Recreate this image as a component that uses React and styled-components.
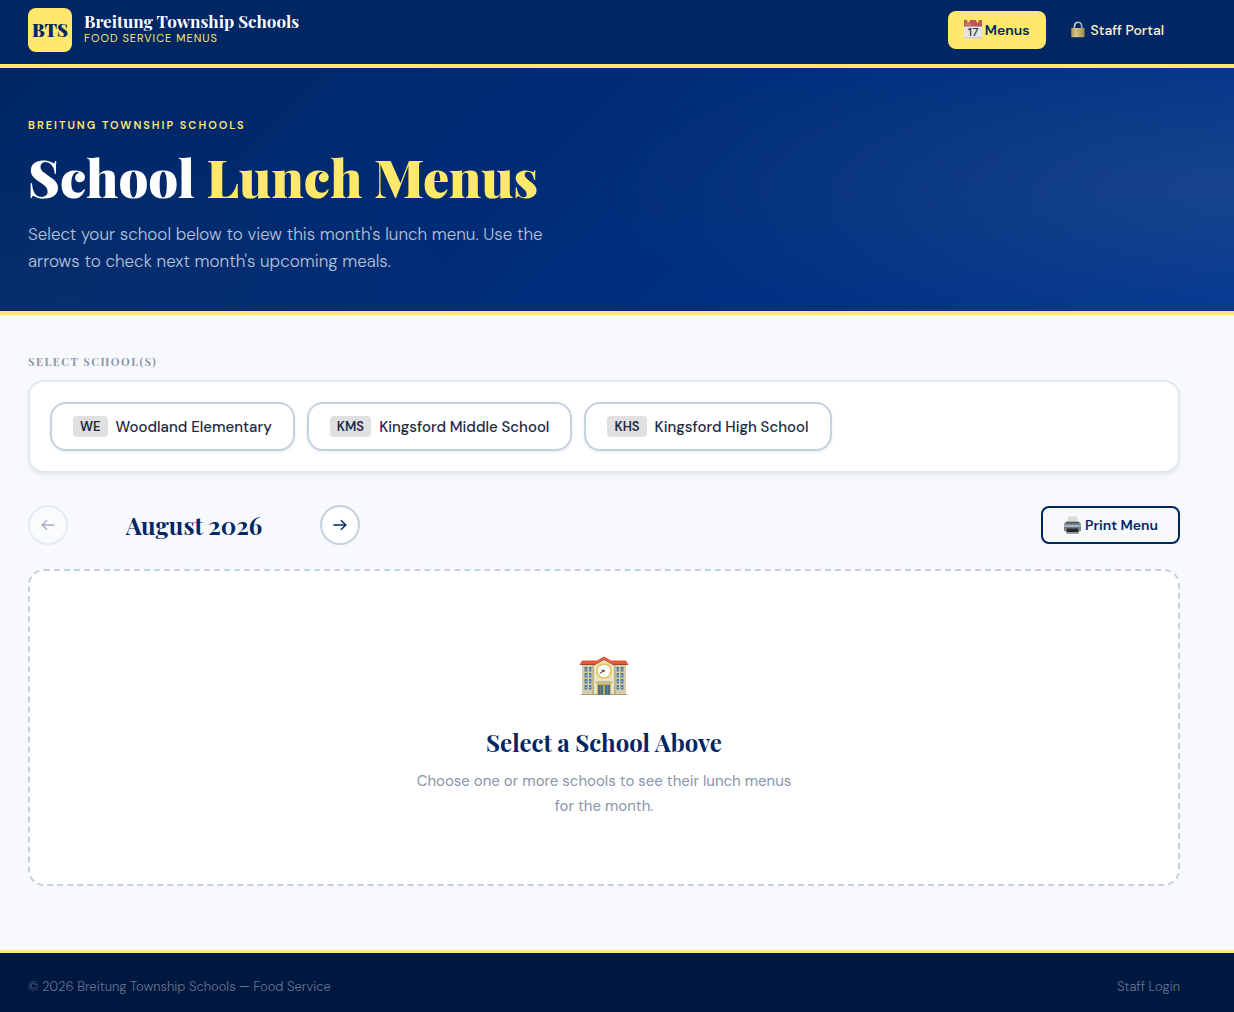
import React, { useState } from "react";
import styled, { createGlobalStyle } from "styled-components";

const navy = "#002664";
const gold = "#ffe86b";
const line = "#c5d0e0";
const muted = "#8896ab";
const serif = '"Playfair Display", "Liberation Serif", serif';
const sans = '"DM Sans", Inter, sans-serif';

const GlobalStyle = createGlobalStyle`
  *, *::before, *::after { box-sizing: border-box; }
  body { margin: 0; background: #f8f9fd; color: #1f2a44; font-family: ${sans}; font-size: 15px; }
  h1, h2, p { margin: 0; }
  button { font-family: inherit; cursor: pointer; }
  a { text-decoration: none; }
`;

const Page = styled.div`
  min-height: 100vh;
  display: flex;
  flex-direction: column;
`;

const Header = styled.header`
  display: flex;
  align-items: center;
  justify-content: space-between;
  padding: 8px 54px 12px 28px;
  background: ${navy};
  border-bottom: 4px solid ${gold};
`;

const Brand = styled.a`
  display: flex;
  align-items: center;
  gap: 12px;
  color: #fff;
`;

const Logo = styled.span`
  display: grid;
  place-items: center;
  width: 44px;
  height: 44px;
  border-radius: 8px;
  background: ${gold};
  color: ${navy};
  font: 900 18px/24px ${serif};
`;

const BrandText = styled.span`
  display: flex;
  flex-direction: column;
  gap: 1px;
  padding-bottom: 3px;
`;

const BrandName = styled.span`
  font: 700 17px/18px ${serif};
`;

const BrandSub = styled.span`
  color: ${gold};
  font-size: 11px;
  line-height: 14px;
  letter-spacing: 1px;
  text-transform: uppercase;
`;

const Nav = styled.nav`
  display: flex;
  gap: 8px;
`;

const NavLink = styled.a`
  display: flex;
  align-items: center;
  gap: 3px;
  padding: 9px 16px;
  border-radius: 8px;
  background: ${(p) => (p.$active ? gold : "transparent")};
  color: ${(p) => (p.$active ? navy : "#fff7cf")};
  font-size: 14px;
  line-height: 20px;
  font-weight: ${(p) => (p.$active ? 600 : 500)};
`;

const Hero = styled.section`
  padding: 48px 28px 36px;
  border-bottom: 4px solid ${gold};
  background:
    radial-gradient(ellipse 52% 70% at 100% 50%, rgba(255, 232, 107, 0.09), transparent),
    radial-gradient(ellipse 40% 70% at 0% 100%, rgba(255, 232, 107, 0.03), transparent),
    linear-gradient(135deg, #002664 0%, #002d7a 50%, #003594 100%);
`;

const Eyebrow = styled.p`
  margin-bottom: 13px;
  color: ${gold};
  font-size: 11px;
  line-height: 19px;
  font-weight: 600;
  letter-spacing: 2px;
  text-transform: uppercase;
`;

const Title = styled.h1`
  margin-bottom: 15px;
  color: #fff;
  font: 900 52px/58px ${serif};

  span { color: ${gold}; }
`;

const Lead = styled.p`
  max-width: 540px;
  color: #b5c2da;
  font-size: 17px;
  line-height: 27px;
  font-weight: 300;
`;

const Main = styled.main`
  flex: 1;
  padding: 36px 54px 64px 28px;
`;

const SectionLabel = styled.h2`
  margin-bottom: 8px;
  color: ${muted};
  font: 700 11px/21px ${serif};
  letter-spacing: 0.14em;
  text-transform: uppercase;
`;

const SchoolCard = styled.div`
  display: flex;
  flex-wrap: wrap;
  gap: 12px;
  padding: 20px;
  border: 2px solid #e2e8f2;
  border-radius: 16px;
  background: #fff;
  box-shadow: 0 2px 4px rgba(0, 38, 100, 0.08);
`;

const SchoolButton = styled.button`
  display: flex;
  align-items: center;
  gap: 8px;
  padding: 12px 21px;
  border: 2px solid ${(p) => (p.$selected ? navy : line)};
  border-radius: 16px;
  background: #fff;
  color: #1f2a44;
  font-size: 15px;
  line-height: 20px;
  font-weight: 500;
  box-shadow: 0 1px 3px rgba(0, 38, 100, 0.1);
`;

const Code = styled.span`
  padding: 0 7px;
  border-radius: 4px;
  background: #e0e0e0;
  font-size: 13px;
  line-height: 21px;
  font-weight: 600;
`;

const Toolbar = styled.div`
  display: flex;
  align-items: center;
  justify-content: space-between;
  margin: 32px 0 24px;
`;

const MonthPicker = styled.div`
  display: flex;
  align-items: center;
  gap: 16px;
`;

const MonthName = styled.h2`
  min-width: 220px;
  color: ${navy};
  text-align: center;
  font: 700 24px/36px ${serif};
`;

const RoundButton = styled.button`
  display: grid;
  place-items: center;
  width: 40px;
  height: 40px;
  padding: 0;
  border: 2px solid ${line};
  border-radius: 50%;
  background: #fff;
  color: ${navy};

  &:disabled { opacity: 0.35; cursor: default; }
`;

const PrintButton = styled.button`
  display: flex;
  align-items: center;
  gap: 3px;
  padding: 7px 20px;
  border: 2px solid ${navy};
  border-radius: 8px;
  background: transparent;
  color: ${navy};
  font-size: 14px;
  line-height: 20px;
  font-weight: 600;
`;

const EmptyState = styled.section`
  display: flex;
  flex-direction: column;
  align-items: center;
  padding: 81px 24px 65px;
  border: 2px dashed ${line};
  border-radius: 16px;
  background: #fff;
  text-align: center;
`;

const EmptyTitle = styled.h2`
  margin: 26px 0 11px;
  color: ${navy};
  font: 700 24px/32px ${serif};
`;

const EmptyText = styled.p`
  max-width: 384px;
  color: ${muted};
  font-size: 15px;
  line-height: 25px;
`;

const Footer = styled.footer`
  display: flex;
  justify-content: space-between;
  padding: 24px 54px 15px 28px;
  border-top: 3px solid ${gold};
  background: #00173f;
  color: #64738e;
  font-size: 13px;
  line-height: 20px;
  font-weight: 300;

  a { color: inherit; }
`;

const CalendarIcon = () => (
  <svg width="18" height="20" viewBox="0 0 18 20" aria-hidden="true">
    <path d="M0 5h18v13.5H0z" fill="#e4e4e6" />
    <path d="M0 17h18v1.5H0z" fill="#cfcfd4" />
    <path d="M0 0h18v6.5H0z" fill="#b9575b" />
    <path d="M2 3.5v2M4 2.5v3M6 3.5v2" stroke="#e2a3a0" strokeWidth="1" />
    <circle cx="4.5" cy="1" r="1.4" fill="#ffe86b" />
    <circle cx="13.5" cy="1" r="1.4" fill="#ffe86b" />
    <text x="9" y="16" textAnchor="middle" fontFamily="Inter, sans-serif" fontSize="11" fontWeight="500" fill="#34363c">17</text>
  </svg>
);

const LockIcon = () => (
  <svg width="18" height="18" viewBox="0 0 18 18" aria-hidden="true">
    <defs>
      <linearGradient id="brass" x1="0" x2="1">
        <stop offset="0" stopColor="#a99851" />
        <stop offset="0.35" stopColor="#d8cb8b" />
        <stop offset="1" stopColor="#9f8c45" />
      </linearGradient>
    </defs>
    <path d="M4.3 8V5.5C4.3 2.6 5.8 1.2 8 1.2s3.7 1.4 3.7 4.3V8" fill="none" stroke="#9eafbd" strokeWidth="1.6" />
    <path d="M4.8 6C4.8 3.1 6 1.7 8 1.7" fill="none" stroke="#dce3e8" strokeWidth=".7" />
    <rect x="1.2" y="7" width="13.4" height="9.3" rx="0.8" fill="url(#brass)" />
    <path d="M2 10h12M2 13h12" stroke="#8c7b3c" strokeWidth=".3" opacity=".4" />
  </svg>
);

const PrinterIcon = () => (
  <svg width="19" height="20" viewBox="0 0 19 20" aria-hidden="true">
    <path d="M5 1.5h9l.8 6H4.2z" fill="#dedbd4" />
    <path d="M3.2 6.5h12.6L18 9v6.2q0 1-1 1H2q-1 0-1-1V9z" fill="#7c858d" />
    <path d="M3.5 7h12l.6 1.5H2.8z" fill="#505963" />
    <path d="M1 10h17v2H1z" fill="#aab5bd" />
    <path d="M1 12h17v1.5H1z" fill="#6d767d" />
    <path d="M4 13.5h11l.8 4H3.2z" fill="#25282a" />
    <path d="M3.6 17h11.8l.4 1.7H3.2z" fill="#8d8e88" />
    <circle cx="15.8" cy="11" r=".6" fill="#53a46c" />
  </svg>
);

const windowRows = [15, 21, 27, 33];

const SchoolIcon = () => (
  <svg width="48" height="48" viewBox="0 0 48 48" aria-hidden="true">
    <path d="M2 11h44v32H2z" fill="#d5ceac" />
    <path d="M2 11h12v2H2zM34 11h12v2H34z" fill="#aaa17f" />
    <path d="M12 13 24 6l12 7v30H12z" fill="#e9e2c3" />
    <path d="M12 13v30h2V12zM36 13v30h-2V12z" fill="#bdb58e" />
    <path d="M2 8.5h15L24 4.5l7 4h15l2 3.5H33l-9-5-9 5H0z" fill="#e8563b" />
    <path d="M0 12h15l9-5 9 5h15v1H33l-9-5-9 5H0z" fill="#a9442e" />
    {windowRows.map((y) => (
      <g key={y}>
        <path d={`M4.5 ${y}h3v4.6h-3zM9 ${y}h2.5v4.6H9zM36.5 ${y}H39v4.6h-2.5zM40.5 ${y}h3v4.6h-3z`} fill="#537c9c" />
        <path d={`M4.5 ${y + 2}h3v.8h-3zM9 ${y + 2}h2.5v.8H9zM36.5 ${y + 2}H39v.8h-2.5zM40.5 ${y + 2}h3v.8h-3z`} fill="#a7bdc5" />
      </g>
    ))}
    <circle cx="24" cy="19" r="7.8" fill="#e4c04e" />
    <circle cx="24" cy="19" r="6.3" fill="#fffdf6" />
    <path d="m19.8 21.5 4.2-2.8-2.5-.6" fill="none" stroke="#333" strokeWidth="1" />
    <circle cx="24" cy="18.8" r=".9" fill="#333" />
    <path d="M16 29h16v3H16z" fill="#c4bb94" />
    <path d="M17 32h14v11H17z" fill="#cdae50" />
    <path d="M18.2 33h4.9v10h-4.9zM24.9 33h4.9v10h-4.9z" fill="#416e90" />
    <path d="M20.6 33v10M27.4 33v10" stroke="#8c9664" strokeWidth=".6" />
    <path d="M1 42h16v1H1zM31 42h16v1H31z" fill="#a79e79" />
  </svg>
);

const Arrow = ({ back }) => (
  <svg width="14" height="12" viewBox="0 0 14 12" fill="none" stroke="currentColor" strokeWidth="1.4" aria-hidden="true">
    <path d={back ? "M13.5 6H1.5M6 1.2 1.2 6 6 10.8" : "M.5 6h12M8 1.2 12.8 6 8 10.8"} />
  </svg>
);

const schools = [
  { code: "WE", name: "Woodland Elementary" },
  { code: "KMS", name: "Kingsford Middle School" },
  { code: "KHS", name: "Kingsford High School" },
];

export default function App() {
  const [selected, setSelected] = useState([]);
  const toggle = (code) =>
    setSelected((list) => (list.includes(code) ? list.filter((c) => c !== code) : [...list, code]));

  return (
    <Page>
      <GlobalStyle />
      <Header>
        <Brand href="#">
          <Logo>BTS</Logo>
          <BrandText>
            <BrandName>Breitung Township Schools</BrandName>
            <BrandSub>Food Service Menus</BrandSub>
          </BrandText>
        </Brand>
        <Nav>
          <NavLink href="#menus" $active><CalendarIcon />Menus</NavLink>
          <NavLink href="#staff"><LockIcon />Staff Portal</NavLink>
        </Nav>
      </Header>

      <Hero>
        <Eyebrow>Breitung Township Schools</Eyebrow>
        <Title>School <span>Lunch Menus</span></Title>
        <Lead>
          Select your school below to view this month's lunch menu. Use the arrows to check next month's upcoming meals.
        </Lead>
      </Hero>

      <Main>
        <SectionLabel>Select School(s)</SectionLabel>
        <SchoolCard>
          {schools.map(({ code, name }) => (
            <SchoolButton
              key={code}
              type="button"
              $selected={selected.includes(code)}
              aria-pressed={selected.includes(code)}
              onClick={() => toggle(code)}
            >
              <Code>{code}</Code>
              {name}
            </SchoolButton>
          ))}
        </SchoolCard>

        <Toolbar>
          <MonthPicker>
            <RoundButton type="button" aria-label="Previous month" disabled><Arrow back /></RoundButton>
            <MonthName>August 2026</MonthName>
            <RoundButton type="button" aria-label="Next month"><Arrow /></RoundButton>
          </MonthPicker>
          <PrintButton type="button"><PrinterIcon />Print Menu</PrintButton>
        </Toolbar>

        <EmptyState>
          <SchoolIcon />
          <EmptyTitle>Select a School Above</EmptyTitle>
          <EmptyText>Choose one or more schools to see their lunch menus for the month.</EmptyText>
        </EmptyState>
      </Main>

      <Footer>
        <span>© 2026 Breitung Township Schools — Food Service</span>
        <a href="#login">Staff Login</a>
      </Footer>
    </Page>
  );
}
